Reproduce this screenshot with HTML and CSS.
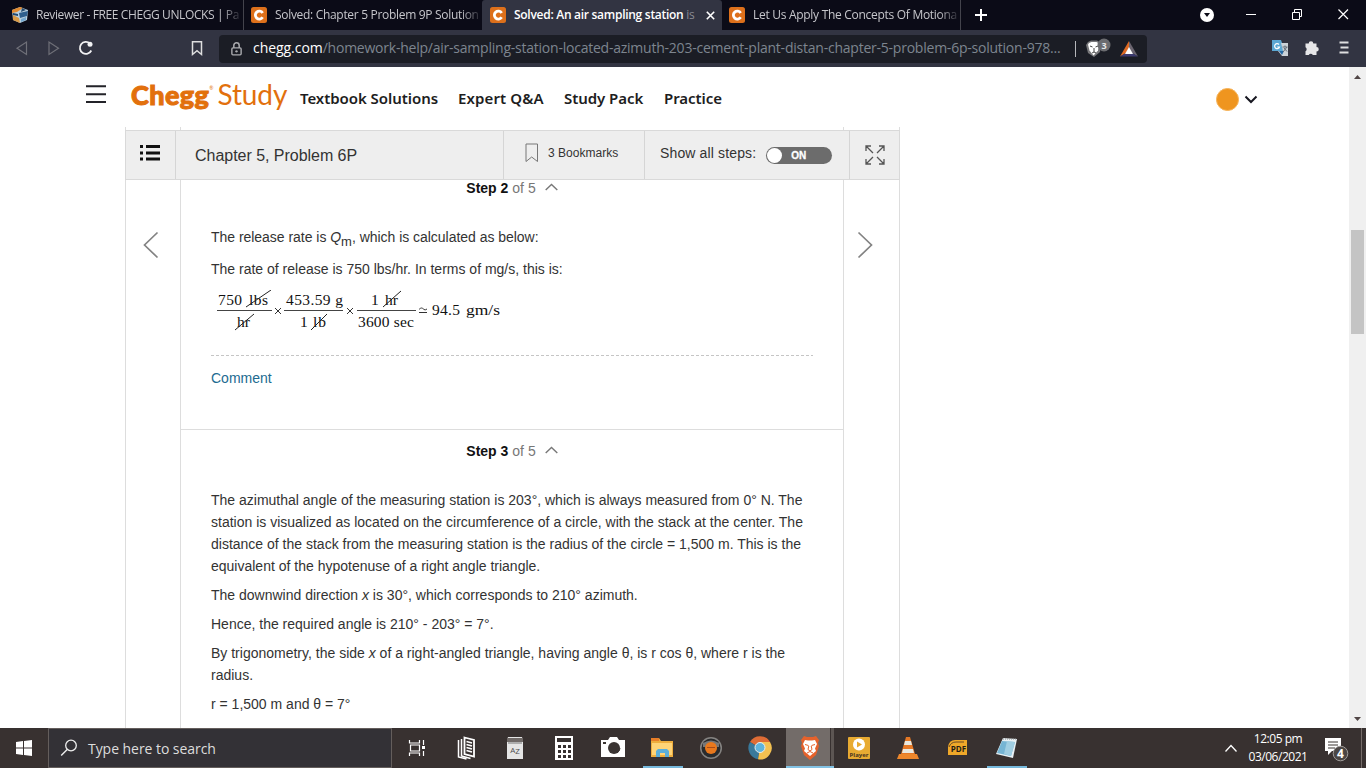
FILE: index.html
```html
<!DOCTYPE html>
<html lang="en">
<head>
<meta charset="utf-8">
<title>Solved: An air sampling station is</title>
<link rel="stylesheet" href="styles.css">
</head>
<body>
<div class="screen">
  <div class="tabs">
    <div class="tab first">
      <svg class="fav" viewBox="0 0 16 16"><path d="M0 3 8 0l8 3-1 10-7 3-7-3z" fill="#b9d0df"/><path d="M0 3 8 0l3 1-6 4-5 1z" fill="#e08a30"/><path d="m1 8 6 3 1 5-7-3z" fill="#d99a45"/><path d="m7 6 9-2-1 5-7 2z" fill="#2e5f8e"/><path d="m1 6 5 1v2L1 8zM10 1l4 2-5 2z" fill="#234a70"/><path d="m9 12 5-2v3l-5 2z" fill="#74a7cf"/></svg>
      <span class="tab-text t1">Reviewer - FREE CHEGG UNLOCKS | Pa</span>
    </div>
    <div class="tab">
      <svg class="fav" viewBox="0 0 16 16"><rect width="16" height="16" rx="2.5" fill="#dd701b"/><path d="M11.7 5.9A4 4 0 1 0 11.7 10.3" fill="none" stroke="#fff" stroke-width="2.8"/></svg>
      <span class="tab-text t2">Solved: Chapter 5 Problem 9P Solution</span>
    </div>
    <div class="tab active">
      <svg class="fav" viewBox="0 0 16 16"><rect width="16" height="16" rx="2.5" fill="#dd701b"/><path d="M11.7 5.9A4 4 0 1 0 11.7 10.3" fill="none" stroke="#fff" stroke-width="2.8"/></svg>
      <span class="tab-text t3">Solved: An air sampling station <i>is</i></span>
      <svg class="tab-close" viewBox="0 0 9 9"><path d="m.8.8 7.4 7.4m0-7.4L.8 8.2" stroke="#fff" stroke-width="1.6"/></svg>
    </div>
    <div class="tab last">
      <svg class="fav" viewBox="0 0 16 16"><rect width="16" height="16" rx="2.5" fill="#dd701b"/><path d="M11.7 5.9A4 4 0 1 0 11.7 10.3" fill="none" stroke="#fff" stroke-width="2.8"/></svg>
      <span class="tab-text t4">Let Us Apply The Concepts Of Motiona</span>
    </div>
    <svg class="window-tools" width="405" height="30"><path d="M20 9v12m-6-6h12" stroke="#fff" stroke-width="2"/><circle cx="246" cy="15" r="7" fill="#fff"/><path d="M243 13h6l-3 4z" fill="#0b0b17"/><path d="M285 14.5h10" stroke="#fff"/><path d="M331.500 12.500h7v7h-7zm2 0v-3h7v7h-2" fill="none" stroke="#fff"/><path d="m377.500 9.500 9.500 9.500m0-9.500-9.500 9.500" stroke="#fff" stroke-width="1.200"/></svg>
  </div>
  <div class="toolbar">
    <svg class="nav-tools" width="219" height="37"><g fill="none"><path d="M26.500 12v12.500L17 18.200z" stroke="#6f7078" stroke-width="1.200"/><path d="M49 12v12.500l9.500-6.300z" stroke="#6f7078" stroke-width="1.200"/><path d="M91.300 20.500A6 6 0 1 1 90 13.500" stroke="#f1f1f3" stroke-width="1.800"/><path d="M192.500 11.800h9v12.700l-4.500-3.800-4.500 3.800z" stroke="#dededf" stroke-width="1.500"/></g><circle cx="90" cy="14.200" r="2.500" fill="#f1f1f3"/></svg>
    <div class="address">
      <svg class="lock" viewBox="0 0 10 13"><path d="M2.500 5.500V3.300a2.500 2.500 0 0 1 5 0v2.200" fill="none" stroke="#aaabaf" stroke-width="1.400"/><rect x=".7" y="5.500" width="8.600" height="6.500" rx="1" fill="none" stroke="#aaabaf" stroke-width="1.300"/><circle cx="5" cy="8.700" r="1.100" fill="#aaabaf"/></svg>
      <span class="url"><b>chegg.com</b>/homework-help/air-sampling-station-located-azimuth-203-cement-plant-distan-chapter-5-problem-6p-solution-978...</span>
      <svg class="shields" width="78" height="28"><path d="M6.500 6v16" stroke="#b6b7bb"/><path d="m19 7 3-1.500h6L32 8l-1 9-6 5-6-4-2-8z" fill="#77777a"/><path d="m20 8 2.500-1h5l2.500 1.500-1 7-4.500 5-4-5-1.500-6z" fill="#fff"/><path d="m21 11 2.500 1m5.500-1-2.500 1M25 13v4m-2 1 2-1 2 1" stroke="#444" fill="none"/><circle cx="35" cy="10" r="6.500" fill="#6b6c70"/><text x="35" y="13.500" text-anchor="middle" fill="#e8e8e8" font-size="9" font-weight="700">3</text><path d="m60 6-9 15.500 6-3.500 3-5z" fill="#df6a22"/><path d="m60 6 9 15.500-6-3.500-3-5z" fill="#6b6570"/><path d="m51 21.500 6-3.500h6l6 3.500z" fill="#3c3a70"/><path d="m60 12 4 7h-8z" fill="#fff"/></svg>
    </div>
    <svg class="extension-tools" width="219" height="37"><path d="M125 10h9l4 11h-13z" fill="#5ca7d3"/><path d="M134 13h7v13h-6l-4-5h5z" fill="#cbd2d8"/><path d="m132 21 3 4 2-4z" fill="#2569a5"/><path d="M135.500 17h5m-2.500-1.500V17m2 0-4 5m1-4 3 3.500" fill="none" stroke="#626d78"/><path d="M132 14.500a2.500 2.500 0 1 0 .5 2.500h-2.300" fill="none" stroke="#fff" stroke-width="1.200"/><path d="M158.500 13.500h3.200a2.300 2.300 0 1 1 4.600 0h3.200v3.500a2.200 2.200 0 1 1 0 4.500V25h-3.700a2.200 2.200 0 0 0-4 0h-3.300v-3.700a2.300 2.300 0 0 0 0-4z" fill="#e6e6e8"/><path d="M192.500 12.500h9m-8 5h8m-9 5h9" stroke="#dededf" stroke-width="1.800"/></svg>
  </div>
  <div class="viewport">
    <main class="page">
      <header class="site-header">
        <svg class="menu" width="20" height="19"><path d="M0 1.200h20M0 9.300h20M0 17h20" stroke="#232329" stroke-width="1.900"/></svg>
        <div class="logo"><b>Chegg</b><sup>®</sup><span>Study</span></div>
        <nav><a class="n1">Textbook Solutions</a><a class="n2">Expert Q&amp;A</a><a class="n3">Study Pack</a><a class="n4">Practice</a></nav>
        <div class="avatar"></div>
        <svg class="chevron" width="14" height="9"><path d="m1.500 1.500 5.500 5.500 5.500-5.500" fill="none" stroke="#171720" stroke-width="2"/></svg>
      </header>
      <section class="reader">
        <div class="stub"></div>
        <div class="problem-bar">
          <div class="contents"><svg width="20" height="16"><path d="M0 1.500h3m3 0h14M0 8h3m3 0h14M0 14h3m3 0h14" stroke="#111" stroke-width="2.800"/></svg></div>
          <div class="problem"><span>Chapter 5, Problem 6P</span></div>
          <div class="bookmarks"><svg width="14" height="20"><path d="M1 1h11.500v17.500L6.700 14 1 18.500z" fill="none" stroke="#777"/></svg><span>3 Bookmarks</span></div>
          <div class="show"><span>Show all steps:</span><div class="toggle"><b>ON</b></div></div>
          <div class="expand"><svg width="20" height="20"><path d="m8 8-7-7m0 5V1h5m6 7 7-7m-5 0h5v5M8 12l-7 7m0-5v5h5m6-7 7 7m-5 0h5v-5" fill="none" stroke="#555" stroke-width="1.300"/></svg></div>
        </div>
        <div class="reader-body">
          <div class="side"><svg width="16" height="28"><path d="M14.500 1.500 1.500 14l13 12.500" fill="none" stroke="#838383" stroke-width="1.700"/></svg></div>
          <div class="steps">
            <article class="step step-two">
              <h2><b>Step 2</b> of 5 <svg width="13" height="8"><path d="m.7 7 5.800-5.500L12.300 7" fill="none" stroke="#777" stroke-width="1.400"/></svg></h2>
              <p class="p1">The release rate is <i>Q</i><sub>m</sub>, which is calculated as below:</p>
              <p class="p2">The rate of release is 750 lbs/hr. In terms of mg/s, this is:</p>
              <svg class="equation" width="290" height="46"><g font-family="Liberation Serif, serif" font-size="15.500" fill="#111"><text x="3" y="15" textLength="24">750</text><text x="34" y="15" textLength="19">lbs</text><text x="22" y="37" textLength="13">hr</text><text x="71" y="15" textLength="57">453.59 g</text><text x="85" y="37">1</text><text x="98" y="37" textLength="13">lb</text><text x="156" y="15">1</text><text x="170" y="15" textLength="13">hr</text><text x="143" y="37" textLength="56">3600 sec</text><text x="217" y="25" textLength="28">94.5</text><text x="251" y="25" textLength="34" lengthAdjust="spacingAndGlyphs">gm/s</text></g><path d="M2 20.500h55m12 0h59m14 0h59" stroke="#444"/><path d="m31 17 25-17M20 40l19-16M96 40l16-16M168 17l18-16" stroke="#222"/><path d="m60 18 6 6m0-6-6 6M132 18l6 6m0-6-6 6" stroke="#333"/><path d="M204 22.500h8m-8-3c2-2 3-2 5 0q1 1 3-.5" fill="none" stroke="#333"/></svg>
              <div class="divider"></div>
              <a class="comment">Comment</a>
            </article>
            <article class="step step-three">
              <h2><b>Step 3</b> of 5 <svg width="13" height="8"><path d="m.7 7 5.800-5.500L12.300 7" fill="none" stroke="#777" stroke-width="1.400"/></svg></h2>
              <p class="azimuth">The azimuthal angle of the measuring station is 203°, which is always measured from 0° N. The<br>station is visualized as located on the circumference of a circle, with the stack at the center. The<br>distance of the stack from the measuring station is the radius of the circle = 1,500 m. This is the<br>equivalent of the hypotenuse of a right angle triangle.</p>
              <p>The downwind direction <i>x</i> is 30°, which corresponds to 210° azimuth.</p>
              <p>Hence, the required angle is 210° - 203° = 7°.</p>
              <p>By trigonometry, the side <i>x</i> of a right-angled triangle, having angle θ, is r cos θ, where r is the<br>radius.</p>
              <p>r = 1,500 m and θ = 7°</p>
            </article>
          </div>
          <div class="side"><svg width="16" height="28"><path d="m1.500 1.500 13 12.500-13 12.500" fill="none" stroke="#838383" stroke-width="1.700"/></svg></div>
        </div>
      </section>
    </main>
    <div class="scrollbar"><svg width="7" height="4"><path d="m0 4 3.500-4L7 4z" fill="#514646"/></svg><div class="thumb"></div><svg width="7" height="4"><path d="m0 0 3.500 4L7 0z" fill="#514646"/></svg></div>
  </div>
  <footer class="taskbar">
    <div class="start"><svg width="16" height="16"><path d="m0 2 7-1v6.500H0zm8-1 8-1v7.500H8zM0 8.500h7V15l-7-1zm8 0h8V16l-8-1z" fill="#fff"/></svg></div>
    <div class="search"><svg width="18" height="18"><circle cx="11" cy="6.500" r="5.300" fill="none" stroke="#eee" stroke-width="1.300"/><path d="m7.200 10.500-6 6" stroke="#eee" stroke-width="1.400"/></svg><span>Type here to search</span></div>
    <div class="apps">
      <div><svg viewBox="0 0 24 24"><path d="M4.500 4v3h10V4M4.500 20v-3h10v3M5.500 9h9v6h-9zM18.500 4v5m0 6v5" fill="none" stroke="#fff" stroke-width="1.200"/><path d="M17 10h3v3h-3z" fill="#fff"/></svg></div>
      <div><svg viewBox="0 0 24 24"><path d="M10.500 1.500 20 4v16.500L10.500 18z" fill="#383130" stroke="#fff" stroke-width="1.800"/><path d="M7.500 3v17l9 2.500M4.500 4v17l8 2" fill="none" stroke="#fff" stroke-width="1.500"/><path d="m12.500 5.500 5.500 1.500m-5.500 1.500L18 10m-5.500 1.500L18 13m-5.500 1.500L18 16" stroke="#fff" stroke-width="1.700"/></svg></div>
      <div><svg viewBox="0 0 24 24"><path d="M5 1h14l1 4v18H4V4z" fill="#e5e5e5"/><path d="M4 2h16v4H4z" fill="#6f6967"/><path d="M5 7h14" stroke="#777"/><text x="12" y="16.500" text-anchor="middle" font-size="8" fill="#4d4d4d">A<tspan dy="1.500">Z</tspan></text></svg></div>
      <div><svg viewBox="0 0 24 24"><path d="M3 0h18v24H3z" fill="#fff"/><path d="M5 2h14v4H5zM6 9h3v3H6zm5 0h3v3h-3zm5 0h3v3h-3zM6 14h3v3H6zm5 0h3v3h-3zm5 0h3v3h-3zM6 19h3v3H6zm5 0h3v3h-3zm5 0h3v3h-3z" fill="#373130"/></svg></div>
      <div><svg viewBox="0 0 24 24"><path d="M0 4h7l2-3h7l2 3h6v17H0z" fill="#fff"/><circle cx="13" cy="12" r="6" fill="#3a3432"/><path d="M16 17a6 6 0 0 0 3-5" fill="none" stroke="#3a3432"/><path d="M2 6h3v2H2z" fill="#3a3432"/></svg></div>
      <div class="running"><svg viewBox="0 0 24 24"><path d="M1 2h8l2 3h12v16H1z" fill="#efae3d"/><path d="M2 7h20v12H2z" fill="#ffd477"/><path d="M1 2h8v3H1z" fill="#e87e28"/><path d="M6 21v-6l2-2h9l2 2v6h-4v-4h-5v4z" fill="#5baed9"/></svg></div>
      <div><svg viewBox="0 0 24 24"><circle cx="12" cy="12" r="11" fill="#858381"/><circle cx="12" cy="12" r="9.500" fill="#292b2d"/><path d="M4 7q8-5 16 0v4H4z" fill="#777"/><circle cx="12" cy="12" r="6" fill="#e8781d"/><path d="M8 11.500h8" stroke="#a64b19"/></svg></div>
      <div><svg viewBox="0 0 24 24"><path d="M12 12 2 6a11.500 11.500 0 0 1 20 0z" fill="#df6c35"/><path d="M12 12 2 6a11.500 11.500 0 0 0 8 17.300z" fill="#39799b"/><path d="M12 12 10 23.300A11.500 11.500 0 0 0 22 6H12z" fill="#f4c151"/><circle cx="12" cy="11.500" r="5" fill="#5fb4dd" stroke="#e9eef0" stroke-width="1"/></svg></div>
      <div class="running current"><svg viewBox="0 0 24 24"><path d="m6 0 3 1h6l3-1 3 4-1 3 1 3-3 9-6 5-6-5-3-9 1-3-1-3z" fill="#e5622c"/><path d="m7 4 3 .5h4l3-.5 2 4-2 4.500 1 2.500-3 2.500-3 2.500-3-2.500L6 15l1-2.500L5 8z" fill="#fff"/><path d="m7 8.500 3.500 1M17 8.500l-3.500 1M10.800 10l-.8 3.500 2 1.500 2-1.500-.8-3.500M9 17l3-1.500 3 1.500" fill="none" stroke="#e5622c" stroke-width="1"/></svg></div>
      <div><svg viewBox="0 0 24 24"><rect x="1" y="1" width="22" height="22" rx="1" fill="#e8ab32"/><circle cx="12" cy="8.500" r="6" fill="#fff"/><path d="m10 5.500 5 3-5 3z" fill="#e8ab32"/><text x="12" y="21" text-anchor="middle" font-size="6" font-weight="700" fill="#493521">Player</text></svg></div>
      <div><svg viewBox="0 0 24 24"><path d="M10 1h4l5 17H5z" fill="#e57825"/><path d="m9 5-1 4h8l-1-4zm-2 8-1 4h12l-1-4z" fill="#e8e8df"/><path d="M3 18h18l2 5H1z" fill="#ed872b"/></svg></div>
      <div><svg viewBox="0 0 24 24"><path d="M3 19V11q1-7 7-7h12v15z" fill="#efa829"/><path d="M4 11q2-5 7-5h8" fill="none" stroke="#6b4b25"/><text x="13.500" y="16" text-anchor="middle" font-size="8" font-weight="700" fill="#251d15">PDF</text></svg></div>
      <div class="running"><svg viewBox="0 0 24 24"><path d="m9 2 14 1-4 19L2 18z" fill="#e9f1f4"/><path d="m8 5 13 1-4 14L3 17z" fill="#76b5d4"/><path d="m13 5 8 1-4 14-7-2z" fill="#a0cee2"/><path d="M9 3h13" stroke="#8b8e8e" stroke-dasharray="1 1"/></svg></div>
    </div>
    <div class="tray"><svg width="14" height="9"><path d="m1.500 7.500 5.500-6 5.500 6" fill="none" stroke="#fff" stroke-width="1.300"/></svg><div class="clock"><span class="time">12:05 pm</span><span class="date">03/06/2021</span></div><svg class="notification" width="26" height="28"><path d="M1 1h16v13H8l-4 4v-4H1z" fill="#fff"/><path d="M4 5h10M4 8h10M4 11h7" stroke="#3b3431"/><circle cx="16.500" cy="16.500" r="7.300" fill="#4b4644" stroke="#a19d9b"/><text x="16.500" y="21" text-anchor="middle" fill="#fff" font-size="12" font-weight="700">4</text></svg></div>
  </footer>
</div>
</body>
</html>
```

FILE: styles.css
```css
* { box-sizing: border-box; }
body { margin: 0; overflow: hidden; font-family: "Liberation Sans", Arial, sans-serif; }
svg { display: block; flex: none; }
.screen { width: 1366px; height: 768px; display: flex; flex-direction: column; background: #fff; }

.tabs { height: 30px; display: flex; flex: none; background: #0b0b17; font: 12px/30px "Open Sans", sans-serif; color: #c6c6cb; }
.tab { width: 238px; flex: none; display: flex; align-items: center; padding: 0 0 0 7px; white-space: nowrap; }
.tab.first { width: 244px; padding-left: 12px; border-right: 1px solid #43434c; }
.tab.active { width: 240px; padding-left: 8px; background: #323442; color: #fff; border-radius: 3px 3px 0 0; }
.tab.last { width: 239px; border-right: 1px solid #43434c; }
.fav { width: 16px; height: 16px; margin-right: 8px; }
.tab-text { flex: none; mask-image: linear-gradient(to right, #000 91%, transparent 102%); }
.t1 { letter-spacing: -.39px; }
.t2 { letter-spacing: -.31px; }
.t3 { font-weight: 600; letter-spacing: -.28px; mask-image: none; }
.t3 i { font-style: normal; font-weight: 400; color: #898a94; }
.t4 { letter-spacing: -.29px; }
.tab-close { width: 9px; height: 9px; margin-left: 11px; }

.toolbar { height: 37px; flex: none; display: flex; align-items: center; background: #323442; }
.address { width: 928px; height: 28px; display: flex; align-items: center; border-radius: 4px; background: #1b1d25; margin-top: 1px; }
.lock { width: 11px; height: 14px; margin-left: 12px; }
.url { width: 816px; flex: none; margin-left: 11px; color: #7d858f; font: 14px/26px "Open Sans", sans-serif; white-space: nowrap; letter-spacing: -.23px; margin-top: -2px; }
.url b { font-weight: 400; color: #fff; letter-spacing: -.05px; }
.shields { font-family: "Open Sans", sans-serif; }

.viewport { height: 661px; flex: none; display: flex; overflow: hidden; }
.page { width: 1349px; overflow: hidden; }
.scrollbar { width: 17px; display: flex; flex-direction: column; align-items: center; padding: 8px 0 7px; background: #f0f0f0; }
.thumb { width: 13px; height: 104px; margin: 151px 0 auto; background: #c4c4c4; }

.site-header { height: 60px; display: flex; align-items: center; padding-left: 86px; color: #1d1d21; }
.menu { margin-top: -6px; }
.logo { width: 169px; height: 42px; margin-left: 25px; display: flex; color: #e2700d; font: 28px/37px Lato, sans-serif; white-space: nowrap; }
.logo b { font-weight: 900; font-size: 27px; letter-spacing: .4px; -webkit-text-stroke: 1px #e2700d; }
.logo sup { font-size: 5px; line-height: 25px; }
.logo span { margin-left: 4px; letter-spacing: -.1px; }
nav { width: 423px; display: flex; font: 600 15px/24px "Noto Sans", sans-serif; margin-top: 1px; white-space: nowrap; letter-spacing: -.05px; }
nav a { flex: none; }
.n1 { width: 158px; }
.n2 { width: 106px; letter-spacing: .12px; }
.n3 { width: 100px; }
.avatar { width: 23px; height: 23px; margin: 4px 0 0 493px; border-radius: 50%; background: #ef951f; border: 1px solid #f6b359; }
.chevron { margin: 5px 0 0 5px; }
.reader { width: 775px; margin-left: 125px; color: #333; }
.stub { height: 3px; border: solid #ddd; border-width: 0 1px; padding: 0 55px 0 54px; }
.stub::before { content: ""; display: block; height: 3px; border: solid #ddd; border-width: 0 1px; }
.problem-bar { height: 50px; display: flex; background: #eeeeee; border: 1px solid #d9d9d9; }
.problem-bar > div { display: flex; align-items: center; border-right: 1px solid #d5d5d5; }
.contents { width: 50px; padding: 0 0 4px 14px; }
.problem { width: 328px; padding: 2px 0 0 19px; font-size: 16px; letter-spacing: -.03px; }
.bookmarks { width: 141px; padding: 0 0 4px 21px; font-size: 12px; }
.bookmarks span { margin-left: 9px; letter-spacing: .02px; }
.show { width: 205px; padding: 0 0 3px 15px; font-size: 14px; letter-spacing: .14px; }
.show > span { margin-top: -2px; }
.toggle { width: 66px; height: 17px; margin: 3px 0 0 10px; background: #6c6c6c; border-radius: 9px; display: flex; align-items: center; color: #fff; font-size: 10px; letter-spacing: 0; }
.toggle::before { content: ""; width: 15px; height: 15px; margin-left: 1px; border-radius: 50%; background: #fff; }
.toggle b { margin-left: 9px; -webkit-text-stroke: .3px #fff; }
.problem-bar .expand { width: 49px; padding-left: 15px; border-right: 0; }
.reader-body { height: 548px; display: flex; border: solid #ddd; border-width: 0 1px; }
.side { width: 54px; padding: 51px 0 0 17px; }
.side:last-child { padding-left: 13px; width: 55px; }
.steps { width: 664px; flex: none; border: solid #ddd; border-width: 0 1px; }
.step { padding: 0 30px; font-size: 14px; line-height: 22px; letter-spacing: 0; white-space: nowrap; }
.step p { margin: 0 0 7px; }
.step-two { height: 253px; border-bottom: 1px solid #ddd; }
.step h2 { display: flex; justify-content: center; align-items: center; gap: 4px; margin: 0 0 27px; font-size: 14px; font-weight: 400; line-height: 22px; color: #777; }
.step-two h2 { padding-top: 0; margin-top: -3px; }
.step h2 b { color: #111; }
.step h2 svg { margin: -3px 0 0 5px; }
.step .p1 { height: 22px; margin-bottom: 10px; letter-spacing: -.03px; }
.step sub { font-size: 13px; line-height: 0; vertical-align: -4px; }
.step .p2 { margin-bottom: 10px; }
.equation { margin-left: 4px; }
.divider { margin-top: 19px; height: 1px; background: repeating-linear-gradient(to right, #c5c5c5 0 3px, transparent 3px 5px); }
.comment { display: block; margin-top: 11px; color: #226b91; }
.step-three h2 { padding-top: 10px; }

.taskbar { height: 40px; flex: none; display: flex; background: #383130; color: #fff; font-family: "Open Sans", sans-serif; }
.start { width: 48px; flex: none; display: flex; align-items: center; justify-content: center; }
.search { width: 344px; flex: none; display: flex; align-items: center; padding-left: 11px; background: #333136; border: 1px solid #645e5c; font-size: 14px; letter-spacing: -.05px; color: #ddd; }
.search span { margin-left: 10px; }
.apps { width: 639px; flex: none; display: flex; }
.apps > div { width: 49.15px; height: 40px; flex: none; padding: 8px 0 0 12.5px; }
.apps svg { width: 24px; height: 24px; }
.apps .running { background: linear-gradient(#76b9dc, #76b9dc) 5px 38px / 40px 2px no-repeat; }
.apps .current { background: linear-gradient(#82c2e4, #82c2e4) 1px 38px / 48px 2px no-repeat, linear-gradient(90deg, #383130 1px, #736c69 1px 45px, #383130 45px 46px, #5d5653 46px 49px, transparent 49px); }
.tray { width: 331px; flex: none; display: flex; align-items: center; padding-left: 193px; border-right: 1px solid #756c69; }
.clock { width: 66px; flex: none; margin-left: 7px; display: flex; flex-direction: column; align-items: center; font-size: 12px; line-height: 18px; letter-spacing: -.48px; white-space: nowrap; }
.notification { margin: 5px 0 0 13px; }
```
